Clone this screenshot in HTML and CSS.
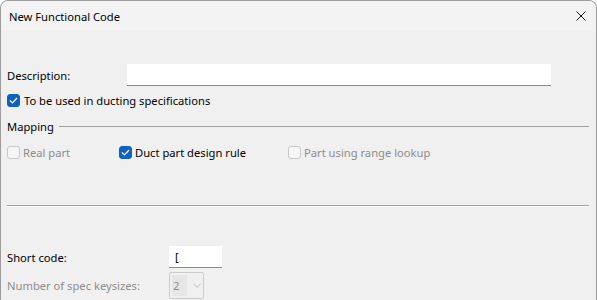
FILE: index.html
```html
<!DOCTYPE html>
<html lang="en">
<head>
  <meta charset="UTF-8">
  <title>New Functional Code</title>
  <link rel="stylesheet" href="styles.css">
</head>
<body>

  <div class="window">
    <div class="titlebar">
      <span class="title">New Functional Code</span>
      <svg class="close" width="10" height="10" viewBox="0 0 10 10">
        <path d="M0.5 0.5 L9.5 9.5 M9.5 0.5 L0.5 9.5" stroke="#1a1a1a" stroke-width="1" fill="none"/>
      </svg>
    </div>

    <div class="content">
      <div class="desc-row">
        <span class="label">Description:</span>
        <div class="field desc-field"></div>
      </div>

      <div class="check ducting">
        <span class="box checked">
          <svg width="9" height="7" viewBox="0 0 9 7"><path d="M1 3.5 L3.5 6 L8 1" stroke="#fff" stroke-width="1.2" fill="none"/></svg>
        </span>
        <span>To be used in ducting specifications</span>
      </div>

      <div class="group-head">
        <span>Mapping</span>
        <span class="rule"></span>
      </div>

      <div class="mapping-row">
        <div class="check disabled real">
          <span class="box"></span>
          <span>Real part</span>
        </div>
        <div class="check duct">
          <span class="box checked">
            <svg width="9" height="7" viewBox="0 0 9 7"><path d="M1 3.5 L3.5 6 L8 1" stroke="#fff" stroke-width="1.2" fill="none"/></svg>
          </span>
          <span>Duct part design rule</span>
        </div>
        <div class="check disabled">
          <span class="box"></span>
          <span>Part using range lookup</span>
        </div>
      </div>

      <div class="separator"></div>

      <div class="short-row">
        <span class="label">Short code:</span>
        <div class="field short-field">[</div>
      </div>

      <div class="keysize-row">
        <span class="label">Number of spec keysizes:</span>
        <div class="combo">
          <span class="combo-value">2</span>
          <svg class="chevron" width="9" height="5" viewBox="0 0 9 5"><path d="M0.5 0.5 L4.5 4.5 L8.5 0.5" stroke="#b5b5b5" stroke-width="1" fill="none"/></svg>
        </div>
      </div>
    </div>
  </div>

</body>
</html>
```

FILE: styles.css
```css
body {
  margin: 0;
  background: #fff;
  font-family: "Noto Sans", "Segoe UI", Arial, sans-serif;
  font-size: 11.2px;
  color: #000;
}
.window {
  width: 595px;
  height: 310px;
  border: 1px solid #9c9c9c;
  border-bottom: none;
  border-radius: 8px 8px 0 0;
  background: #f0f0f0;
  overflow: hidden;
}
.titlebar {
  height: 30px;
  background: #f3f3f3;
  display: flex;
  align-items: center;
  justify-content: space-between;
  padding: 0 10px 0 8px;
}
.title {
  margin-top: 1px;
}
.close {
  margin-top: -1px;
}
.content {
  padding: 0 7px 0 6px;
}
.label {
  display: inline-block;
}
.field {
  background: #fff;
  border-bottom: 1px solid #8b8b8b;
  box-sizing: border-box;
  height: 22px;
}
.desc-row {
  margin-top: 33px;
  display: flex;
  align-items: center;
  height: 22px;
}
.desc-row .label {
  width: 120px;
}
.desc-field {
  width: 424px;
}
.check {
  display: flex;
  align-items: center;
  height: 14px;
}
.box {
  width: 13px;
  height: 13px;
  box-sizing: border-box;
  border: 1px solid #c8c8c8;
  border-radius: 3px;
  background: #f6f6f6;
  margin-right: 3px;
  display: flex;
  align-items: center;
  justify-content: center;
}
.box.checked {
  background: #0f62be;
  border-color: #0f62be;
}
.ducting {
  margin-top: 7px;
}
.ducting .box {
  margin-right: 4px;
}
.disabled {
  color: #8d8d8d;
}
.group-head {
  margin-top: 11px;
  height: 16px;
  display: flex;
  align-items: center;
}
.rule {
  flex: 1;
  border-top: 1px solid #a0a0a0;
  margin-left: 5px;
}
.mapping-row {
  margin-top: 11px;
  display: flex;
}
.mapping-row .real {
  width: 112px;
}
.mapping-row .duct {
  width: 169px;
}
.separator {
  margin-top: 46px;
  border-top: 1px solid #a0a0a0;
  border-bottom: 1px solid #fff;
}
.short-row {
  margin-top: 39px;
  display: flex;
  align-items: center;
  height: 22px;
}
.short-row .label,
.keysize-row .label {
  width: 162px;
}
.short-field {
  width: 53px;
  padding-left: 6px;
  line-height: 21px;
}
.keysize-row {
  margin-top: 4px;
  display: flex;
  align-items: center;
  height: 27px;
  color: #8d8d8d;
}
.combo {
  width: 35px;
  height: 27px;
  box-sizing: border-box;
  border: 1px solid #cccccc;
  border-radius: 2px;
  display: flex;
  align-items: center;
  padding: 2px;
}
.combo-value {
  width: 15px;
  height: 21px;
  background: #e6e6e6;
  line-height: 21px;
  padding-left: 1px;
}
.chevron {
  margin-left: 6px;
}
```
